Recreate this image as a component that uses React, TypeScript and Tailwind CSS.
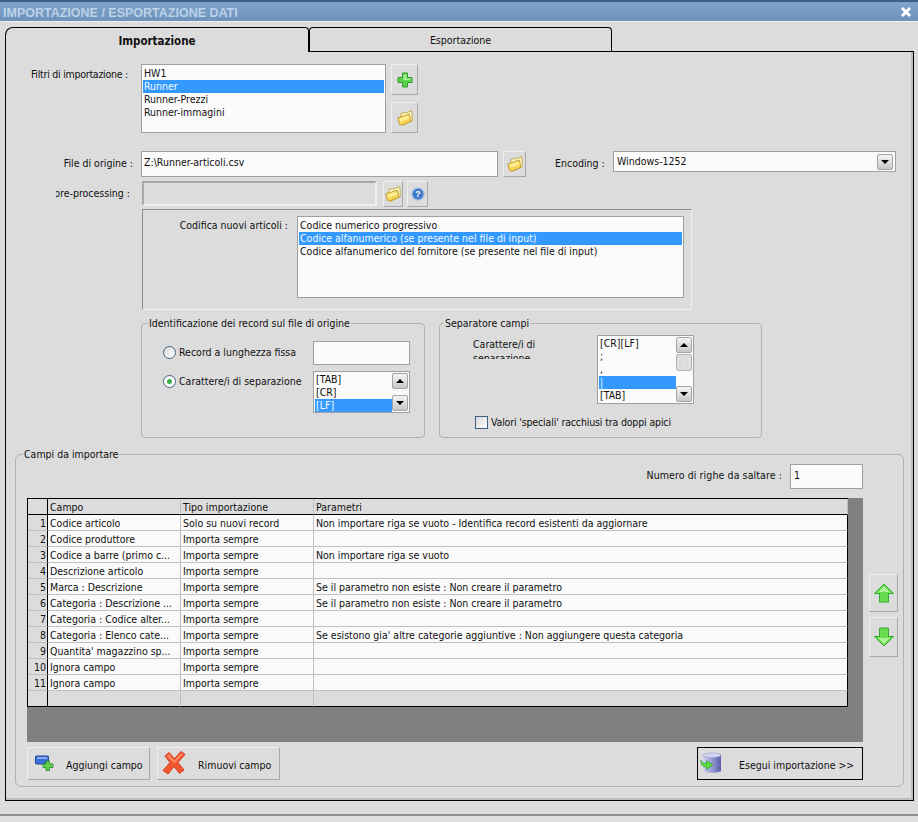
import type { ReactNode } from "react";

const fieldRows = [
  ["1", "Codice articolo", "Solo su nuovi record", "Non importare riga se vuoto - Identifica record esistenti da aggiornare"],
  ["2", "Codice produttore", "Importa sempre", ""],
  ["3", "Codice a barre (primo c...", "Importa sempre", "Non importare riga se vuoto"],
  ["4", "Descrizione articolo", "Importa sempre", ""],
  ["5", "Marca : Descrizione", "Importa sempre", "Se il parametro non esiste : Non creare il parametro"],
  ["6", "Categoria : Descrizione ...", "Importa sempre", "Se il parametro non esiste : Non creare il parametro"],
  ["7", "Categoria : Codice alter...", "Importa sempre", ""],
  ["8", "Categoria : Elenco cate...", "Importa sempre", "Se esistono gia' altre categorie aggiuntive : Non aggiungere questa categoria"],
  ["9", "Quantita' magazzino sp...", "Importa sempre", ""],
  ["10", "Ignora campo", "Importa sempre", ""],
  ["11", "Ignora campo", "Importa sempre", ""],
  ["", "", "", ""],
];

function FolderIcon() {
  return (
    <svg width="16" height="16" viewBox="0 0 16 16">
      <path d="M4 7 L4 3.5 L7.5 2.5 L8.5 3 L14.8 0.8 L15.4 10.5 L6 15 Z" fill="#fff8c4" stroke="#b79a2e" strokeWidth="0.8" strokeLinejoin="round" />
      <path d="M0.8 8 L12.2 4 L14.2 11.2 L5 15.2 L2.6 14.4 Z" fill="#f6d350" stroke="#b4902a" strokeWidth="0.8" strokeLinejoin="round" />
      <path d="M2.2 8.4 L11.4 5.2 L12.4 8.6 L3.2 12 Z" fill="#fdec92" />
    </svg>
  );
}

function PlusIcon({ size = 16 }: { size?: number }) {
  return (
    <svg width={size} height={size} viewBox="0 0 16 16">
      <path d="M5.5 1 H10.5 V5.5 H15 V10.5 H10.5 V15 H5.5 V10.5 H1 V5.5 H5.5 Z" fill="#5fd04a" stroke="#2f9a2a" strokeWidth="1" strokeLinejoin="round" />
      <path d="M6.5 2.5 H9.5 V6.5 H13.5 V8 H6.5 Z" fill="#a8ee92" />
    </svg>
  );
}

function HelpIcon() {
  return (
    <svg width="14" height="14" viewBox="0 0 16 16">
      <circle cx="8" cy="8" r="7" fill="#3f78c8" stroke="#a9c3e6" strokeWidth="1.6" />
      <text x="8" y="11.5" textAnchor="middle" fontSize="10" fontWeight="700" fill="#fff" fontFamily="Liberation Sans, sans-serif">?</text>
    </svg>
  );
}

function ArrowIcon({ down = false }: { down?: boolean }) {
  return (
    <svg width="20" height="20" viewBox="0 0 20 20" className={down ? "rotate-180" : ""}>
      <path d="M10 1 L19.5 10.5 L14.5 10.5 L14.5 19 L5.5 19 L5.5 10.5 L0.5 10.5 Z" fill="#67dc4e" stroke="#35a52f" strokeWidth="1" strokeLinejoin="round" />
      <path d="M10 3 L16 9.5 L10 8.5 L4 9.5 Z" fill="#b4f39c" />
    </svg>
  );
}

function CardPlusIcon() {
  return (
    <svg width="20" height="16" viewBox="0 0 20 16">
      <rect x="0.5" y="1" width="13" height="8" rx="1" fill="#3a6fd8" stroke="#24479a" />
      <rect x="2" y="2" width="10" height="2" fill="#86aaf0" />
      <path d="M11 6 H14.5 V9 H18 V12.5 H14.5 V15.5 H11 V12.5 H8 V9 H11 Z" fill="#63d24f" stroke="#23852a" strokeWidth="0.8" />
    </svg>
  );
}

function CrossIcon() {
  return (
    <svg width="24" height="24" viewBox="0 0 24 24">
      <path d="M3 5 L7 1.5 L12.5 7.5 L19 0.5 L23 3.5 L16 11.5 L22 19 L17.5 22.5 L12 15.5 L6 23 L1 19.5 L8 11.5 Z" fill="#f2572f" stroke="#d3401f" strokeWidth="1" strokeLinejoin="round" />
      <path d="M4.5 5 L7 3.5 L12.5 9.5 L19 2.5 L21 3.5 L12.5 12 Z" fill="#fb8a68" />
    </svg>
  );
}

function DatabaseIcon() {
  return (
    <svg width="22" height="22" viewBox="0 0 22 22">
      <defs>
        <linearGradient id="dbBody" x1="0" x2="1" y1="0" y2="0">
          <stop offset="0" stopColor="#d2d4ef" />
          <stop offset="0.55" stopColor="#9094d0" />
          <stop offset="1" stopColor="#5a5ea8" />
        </linearGradient>
      </defs>
      <path d="M3 3 C3 0.5 21 0.5 21 3 V18.5 C21 21.5 3 21.5 3 18.5 Z" fill="url(#dbBody)" />
      <ellipse cx="12" cy="3.2" rx="9" ry="2.2" fill="#d5d7f2" stroke="#8d90c8" strokeWidth="0.5" />
      <path d="M1 8 C1.5 11 3.5 11.5 6.5 11.5 L6.5 8.5 L13 13 L6.5 17.5 L6.5 15 C3 15 0.5 13 1 8 Z" fill="#5cdc42" stroke="#2b9a2c" strokeWidth="0.7" strokeLinejoin="round" />
    </svg>
  );
}

function ToolButton({ className, children }: { className: string; children: ReactNode }) {
  return (
    <button className={`flex items-center justify-center bg-[#dcdcdc] border border-[#efefef] border-r-[#a8a8a8] border-b-[#a8a8a8] ${className}`}>
      {children}
    </button>
  );
}

function ScrollButton({ down = false }: { down?: boolean }) {
  return (
    <div className="w-4 h-4 flex items-center justify-center rounded-[2px] border border-[#a4a4a4] bg-gradient-to-b from-[#f4f4f4] to-[#c8c8c8]">
      <div className={`w-0 h-0 border-x-[4px] border-x-transparent ${down ? "border-t-[4px] border-t-black" : "border-b-[4px] border-b-black"}`} />
    </div>
  );
}

function ListRow({ selected, children }: { selected?: boolean; children?: ReactNode }) {
  return (
    <div className={`h-[13px] leading-[13px] pl-[1px] whitespace-nowrap overflow-hidden ${selected ? "bg-[#3399ff] text-[#f4f9ff]" : ""}`}>
      {children}
    </div>
  );
}

function MainTable() {
  return (
    <table className="table-fixed border-separate border-spacing-0 w-[820px] bg-[#fafafa] border-t border-l border-black">
      <colgroup>
        <col className="w-[20px]" />
        <col className="w-[133px]" />
        <col className="w-[133px]" />
        <col className="w-[534px]" />
      </colgroup>
      <thead>
        <tr className="h-[16px] bg-[#dcdcdc]">
          <th className="border-r border-b border-black" />
          {["Campo", "Tipo importazione", "Parametri"].map((h) => (
            <th key={h} className="border-r border-b border-r-[#c0c0c0] border-b-black pl-[2px] pt-[2px] text-left font-normal leading-[13px]">
              {h}
            </th>
          ))}
        </tr>
      </thead>
      <tbody>
        {fieldRows.map((r, i) => {
          const blank = i === fieldRows.length - 1;
          return (
            <tr key={i} className={`h-[16px] ${blank ? "bg-[#dcdcdc]" : ""}`}>
              <td className={`border-r border-r-black bg-[#dcdcdc] text-right pr-[1px] pt-[2px] leading-[13px] border-b ${blank ? "border-b-black" : "border-b-[#c0c0c0]"}`}>
                {r[0]}
              </td>
              {[r[1], r[2], r[3]].map((c, j) => (
                <td key={j} className={`border-r border-r-[#c0c0c0] border-b pl-[2px] pt-[2px] leading-[13px] whitespace-nowrap overflow-hidden ${blank ? "border-b-black" : "border-b-[#c0c0c0]"} ${j === 2 ? "border-r-black" : ""}`}>
                  {c}
                </td>
              ))}
            </tr>
          );
        })}
      </tbody>
    </table>
  );
}

export default function App() {
  return (
    <div className="w-[918px] h-[822px] overflow-hidden flex flex-col bg-[#dcdcdc] text-[#111] text-[10.5px] font-['DejaVu_Sans_Condensed','DejaVu_Sans',sans-serif]">
      {/* Title bar */}
      <div className="h-[22px] shrink-0 flex items-center justify-between pl-[3px] pr-[6px] border-t-2 border-[#3f5f88] border-b border-b-[#f0f0f0] bg-gradient-to-b from-[#80a3c9] to-[#6d93bc]">
        <span className="font-bold text-[12.5px] text-[#bcd2e8] font-['Liberation_Sans',sans-serif] pt-[3px]">IMPORTAZIONE / ESPORTAZIONE DATI</span>
        <svg width="12" height="12" viewBox="0 0 12 12">
          <path d="M2 2 L10 10 M10 2 L2 10" stroke="#fff" strokeWidth="3" />
        </svg>
      </div>

      <div className="flex-1 flex flex-col px-[5px] pt-[5px]">
        {/* Tabs */}
        <div className="flex h-[25px] -mb-px relative z-10">
          <div className="w-[304px] h-[25px] flex items-center justify-center pt-[3px] bg-[#dcdcdc] border border-b-0 border-black rounded-tl-[8px] rounded-tr-[4px] font-bold text-[11.5px]">
            Importazione
          </div>
          <div className="w-[303px] h-[24px] flex items-center justify-center pt-[3px] bg-[#dcdcdc] border border-b-0 border-black rounded-t-[4px]">
            Esportazione
          </div>
        </div>

        {/* Panel */}
        <div className="w-[909px] h-[750px] border border-black bg-[#dcdcdc] shadow-[inset_-2px_-2px_0_#bdbdbd]">
          {/* Filters */}
          <div className="flex items-start mt-[12px]">
            <label className="w-[122px] text-right pt-[3px] tracking-[-0.25px]">Filtri di importazione :</label>
            <div className="ml-[13px] w-[245px] h-[69px] border border-[#a0a0a0] bg-[#fbfbfb] p-px pt-[2px]">
              <ListRow>HW1</ListRow>
              <ListRow selected>Runner</ListRow>
              <ListRow>Runner-Prezzi</ListRow>
              <ListRow>Runner-immagini</ListRow>
            </div>
            <div className="ml-[5px] flex flex-col gap-[7px]">
              <ToolButton className="w-[27px] h-[31px]"><PlusIcon /></ToolButton>
              <ToolButton className="w-[27px] h-[31px]"><FolderIcon /></ToolButton>
            </div>
          </div>

          {/* Source file */}
          <div className="flex items-start mt-[18px]">
            <label className="w-[127px] text-right pt-[5px]">File di origine :</label>
            <div className="ml-[8px] w-[357px] h-[26px] border border-[#a0a0a0] bg-[#fbfbfb] px-[2px] pt-[3px]">Z:\Runner-articoli.csv</div>
            <ToolButton className="ml-[5px] w-[23px] h-[26px]"><FolderIcon /></ToolButton>
            <label className="ml-[29px] w-[50px] pt-[5px] whitespace-nowrap">Encoding :</label>
            <div className="ml-[8px] w-[283px] h-[21px] border border-[#a0a0a0] bg-[#fbfbfb] pl-[3px] flex items-center justify-between pr-[2px]">
              <span>Windows-1252</span>
              <ScrollButton down />
            </div>
          </div>

          {/* Pre-processing */}
          <div className="flex items-start mt-[4px]">
            <label className="ml-[50px] w-[74px] overflow-hidden flex justify-end whitespace-nowrap pt-[5px]">pre-processing :</label>
            <div className="ml-[12px] w-[235px] h-[25px] border-2 border-[#a8a8a8] border-r-[#f0f0f0] border-b-[#f0f0f0] bg-[#dcdcdc]" />
            <ToolButton className="ml-[6px] w-[20px] h-[26px]"><FolderIcon /></ToolButton>
            <ToolButton className="ml-[4px] w-[21px] h-[26px]"><HelpIcon /></ToolButton>
          </div>

          {/* New articles coding */}
          <div className="ml-[136px] mt-[2px] w-[550px] h-[101px] flex items-start border border-[#8e8e8e] border-r-[#f0f0f0] border-b-[#f0f0f0]">
            <label className="w-[145px] text-right pt-[8px]">Codifica nuovi articoli :</label>
            <div className="ml-[9px] mt-[6px] w-[387px] h-[82px] border border-[#a0a0a0] bg-[#fbfbfb] p-px pt-[2px]">
              <ListRow>Codice numerico progressivo</ListRow>
              <ListRow selected>Codice alfanumerico (se presente nel file di input)</ListRow>
              <ListRow>Codice alfanumerico del fornitore (se presente nel file di input)</ListRow>
            </div>
          </div>

          {/* Record identification and separator */}
          <div className="flex items-start mt-[6px]">
            <fieldset className="ml-[135px] w-[284px] h-[122px] border border-[#b0b0b0] rounded-[4px] pl-[21px]">
              <legend className="ml-[-15px] px-[1px]">Identificazione dei record sul file di origine</legend>
              <div className="flex items-center h-[24px] mt-[9px]">
                <span className="w-[13px] h-[13px] rounded-full border border-[#3f5f80] bg-gradient-to-br from-[#d8d8d8] to-white" />
                <span className="ml-[3px] w-[134px]">Record a lunghezza fissa</span>
                <div className="w-[97px] h-[24px] border border-[#a0a0a0] bg-[#fbfbfb]" />
              </div>
              <div className="flex items-start mt-[6px]">
                <span className="mt-[4px] w-[13px] h-[13px] rounded-full border border-[#3f5f80] bg-white flex items-center justify-center">
                  <span className="w-[5px] h-[5px] rounded-full bg-[#3cb04a]" />
                </span>
                <span className="ml-[3px] mt-[3px] w-[134px]">Carattere/i di separazione</span>
                <div className="w-[97px] h-[42px] border border-[#a0a0a0] bg-[#fbfbfb] flex overflow-hidden">
                  <div className="w-[78px] pt-[1px] pl-px">
                    <ListRow>[TAB]</ListRow>
                    <ListRow>[CR]</ListRow>
                    <ListRow selected>[LF]</ListRow>
                  </div>
                  <div className="flex flex-col justify-between py-[1px]">
                    <ScrollButton />
                    <ScrollButton down />
                  </div>
                </div>
              </div>
            </fieldset>

            <fieldset className="ml-[14px] w-[323px] h-[122px] border border-[#b0b0b0] rounded-[4px]">
              <legend className="ml-[4px] px-[1px]">Separatore campi</legend>
              <div className="flex items-start mt-[3px]">
                <div className="ml-[33px] w-[110px] h-[22px] mt-[2px] leading-[14px] overflow-hidden">Carattere/i di separazione</div>
                <div className="ml-[14px] w-[97px] h-[69px] border border-[#a0a0a0] bg-[#fbfbfb] flex overflow-hidden">
                  <div className="w-[78px] pt-[1px] pl-px">
                    <ListRow>[CR][LF]</ListRow>
                    <ListRow>;</ListRow>
                    <ListRow>,</ListRow>
                    <ListRow selected>|</ListRow>
                    <ListRow>[TAB]</ListRow>
                  </div>
                  <div className="flex flex-col py-[1px]">
                    <ScrollButton />
                    <div className="w-4 h-[17px] mt-px rounded-[2px] border border-[#b4b4b4] bg-[#dcdcdc] grid grid-cols-3 gap-[2px] place-content-center justify-items-center">
                      {Array.from({ length: 9 }).map((_, i) => (
                        <span key={i} className="w-px h-px bg-[#f8f8f8]" />
                      ))}
                    </div>
                    <div className="flex-1" />
                    <ScrollButton down />
                  </div>
                </div>
              </div>
              <div className="flex items-center ml-[35px] mt-[11px]">
                <span className="w-[13px] h-[13px] border border-[#3f5f80] bg-gradient-to-br from-[#d8d8d8] to-white" />
                <span className="ml-[3px] tracking-[-0.15px]">Valori 'speciali' racchiusi tra doppi apici</span>
              </div>
            </fieldset>
          </div>

          {/* Fields */}
          <fieldset className="ml-[9px] mt-[9px] w-[889px] h-[340px] border border-[#b0b0b0] rounded-[6px] pl-[11px]">
            <legend className="ml-[-4px] px-[1px]">Campi da importare</legend>
            <div className="flex items-center justify-end w-[836px] h-[25px] mt-[1px]">
              <label className="tracking-[0.1px]">Numero di righe da saltare :</label>
              <div className="ml-[8px] w-[73px] h-[25px] border border-[#a0a0a0] bg-[#fbfbfb] pl-[3px] flex items-center">1</div>
            </div>

            <div className="flex items-start mt-[9px]">
              <div className="w-[836px] h-[244px] bg-[#808080]">
                <MainTable />
              </div>
              <div className="ml-[6px] mt-[76px] flex flex-col gap-[5px]">
                <ToolButton className="w-[29px] h-[38px]"><ArrowIcon /></ToolButton>
                <ToolButton className="w-[29px] h-[40px]"><ArrowIcon down /></ToolButton>
              </div>
            </div>

            <div className="flex items-start w-[836px] mt-[5px]">
              <ToolButton className="w-[123px] h-[33px] !justify-start pl-[7px]">
                <CardPlusIcon />
                <span className="ml-[11px] mt-[5px]">Aggiungi campo</span>
              </ToolButton>
              <ToolButton className="ml-[7px] w-[123px] h-[33px] !justify-start pl-[4px]">
                <CrossIcon />
                <span className="ml-[12px] mt-[5px]">Rimuovi campo</span>
              </ToolButton>
              <button className="ml-auto w-[166px] h-[33px] flex items-center pl-[2px] bg-[#dcdcdc] border border-black">
                <DatabaseIcon />
                <span className="ml-[17px] mt-[5px]">Esegui importazione &gt;&gt;</span>
              </button>
            </div>
          </fieldset>
        </div>
      </div>

      {/* Status bar */}
      <div className="h-[8px] shrink-0 border-t-2 border-[#8e8e8e] bg-[#dedede]" />
    </div>
  );
}
